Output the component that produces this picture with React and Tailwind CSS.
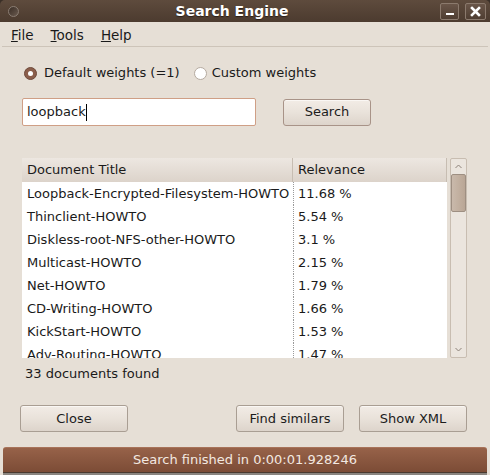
import React from "react";

const rows = [
  ["Loopback-Encrypted-Filesystem-HOWTO", "11.68 %"],
  ["Thinclient-HOWTO", "5.54 %"],
  ["Diskless-root-NFS-other-HOWTO", "3.1 %"],
  ["Multicast-HOWTO", "2.15 %"],
  ["Net-HOWTO", "1.79 %"],
  ["CD-Writing-HOWTO", "1.66 %"],
  ["KickStart-HOWTO", "1.53 %"],
  ["Adv-Routing-HOWTO", "1.47 %"],
];

function Btn({ children, className = "" }) {
  return (
    <div
      className={
        "h-[27px] flex items-center justify-center rounded-[3px] border border-[#a99e93] bg-gradient-to-b from-[#f2ece6] via-[#e9e2da] to-[#ddd4cb] text-[13px] text-[#1c1c1c] shadow-[inset_0_1px_0_#faf7f4] " +
        className
      }
    >
      {children}
    </div>
  );
}

export default function App() {
  return (
    <div className="w-[490px] h-[475px] bg-[#3a2f27] overflow-hidden font-['DejaVu_Sans',sans-serif] text-[13px] text-[#1a1a1a]">
      {/* title bar */}
      <div className="h-[22px] rounded-t-[5px] bg-gradient-to-b from-[#5e4b3d] to-[#4c3b2f] flex items-center relative">
        <div className="ml-[8px] w-[11px] h-[11px] rounded-full border border-[#8a7d73] bg-gradient-to-br from-[#3a2e26] to-[#6a5a4f]" />
        <div className="absolute left-0 right-0 top-0 h-[22px] pr-[26px] flex items-center justify-center text-[14px] font-bold text-white [text-shadow:0_1px_1px_#2a1f18]">
          Search Engine
        </div>
        <div className="ml-auto mr-[4px] flex gap-[6px]">
          <div className="w-[19px] h-[17px] rounded-[2px] border border-[#8b7a6d] bg-gradient-to-b from-[#6a5649] to-[#4f3e32] flex items-end justify-center pb-[4px]">
            <div className="w-[8px] h-[2px] bg-white" />
          </div>
          <div className="w-[21px] h-[17px] rounded-[2px] border border-[#8b7a6d] bg-gradient-to-b from-[#6a5649] to-[#4f3e32] flex items-center justify-center">
            <svg width="11" height="11" viewBox="0 0 11 11">
              <path d="M2 2 L9 9 M9 2 L2 9" stroke="white" strokeWidth="2.6" strokeLinecap="square" />
            </svg>
          </div>
        </div>
      </div>

      {/* window body */}
      <div className="h-[453px] bg-[#e6dfd6] flex flex-col">
        {/* menu */}
        <div className="h-[25px] pt-[2px] flex items-center border-b border-[#cdc4b9] mx-[2px] text-[13.5px]">
          <span className="ml-[9px]"><span className="underline">F</span>ile</span>
          <span className="ml-[17px]"><span className="underline">T</span>ools</span>
          <span className="ml-[17px]"><span className="underline">H</span>elp</span>
        </div>

        {/* radios */}
        <div className="mt-[16px] h-[20px] flex items-center">
          <div className="ml-[24px] w-[13px] h-[13px] rounded-full bg-[#8b5e4b] border border-[#6f4a3b] flex items-center justify-center">
            <div className="w-[5px] h-[5px] rounded-full bg-white" />
          </div>
          <span className="ml-[7px]">Default weights (=1)</span>
          <div className="ml-[14px] w-[13px] h-[13px] rounded-full bg-white border border-[#b5aaa0]" />
          <span className="ml-[5px]">Custom weights</span>
        </div>

        {/* input row */}
        <div className="mt-[15px] flex items-center">
          <div className="ml-[22px] w-[234px] h-[28px] bg-white border border-[#cf9f86] rounded-[2px] flex items-center pl-[4px]">
            <span>loopback</span>
            <span className="w-px h-[17px] bg-black" />
          </div>
          <Btn className="ml-[27px] w-[88px] from-[#efe2da] via-[#e6d3c8] to-[#dcc7bb] border-[#a89388]">Search</Btn>
        </div>

        {/* tree */}
        <div className="mt-[32px] ml-[22px] flex">
          <div className="w-[425px] h-[200px] flex flex-col overflow-hidden">
            <div className="h-[24px] flex items-center bg-gradient-to-b from-[#ede7e1] to-[#dcd3ca] shrink-0">
              <div className="w-[271px] h-full flex items-center pl-[5px] border-r border-[#c7bdb2]">Document Title</div>
              <div className="flex-1 h-full flex items-center pl-[5px] border-r border-[#c7bdb2]">Relevance</div>
            </div>
            <div className="flex-1 bg-white overflow-hidden">
              {rows.map(([t, r]) => (
                <div key={t} className="h-[23px] flex items-center">
                  <div className="w-[271px] pl-[5px] whitespace-nowrap overflow-hidden">{t}</div>
                  <div className="h-full pl-[4px] flex items-center border-l border-dotted border-[#9a9a9a]">{r}</div>
                </div>
              ))}
            </div>
          </div>
          {/* scrollbar */}
          <div className="ml-[3px] w-[17px] h-[200px] rounded-[2px] border border-[#c8bdb1] bg-[#ebe5de] flex flex-col items-center">
            <div className="h-[15px] flex items-center justify-center">
              <svg width="7" height="5" viewBox="0 0 7 5"><path d="M0.5 4 L3.5 1 L6.5 4" stroke="#8c8178" fill="none" strokeWidth="1" /></svg>
            </div>
            <div className="w-[15px] h-[38px] rounded-[2px] border border-[#9e8f82] bg-gradient-to-r from-[#c9b9ab] via-[#c2b0a0] to-[#b9a696]" />
            <div className="flex-1" />
            <div className="h-[16px] flex items-center justify-center">
              <svg width="7" height="5" viewBox="0 0 7 5"><path d="M0.5 1 L3.5 4 L6.5 1" stroke="#8c8178" fill="none" strokeWidth="1" /></svg>
            </div>
          </div>
        </div>

        <div className="mt-[7px] ml-[25px] h-[18px] flex items-center">33 documents found</div>

        {/* buttons */}
        <div className="mt-[22px] flex">
          <Btn className="ml-[20px] w-[108px]">Close</Btn>
          <Btn className="ml-[108px] w-[108px]">Find similars</Btn>
          <Btn className="ml-[15px] w-[108px]">Show XML</Btn>
        </div>

        {/* status */}
        <div className="mt-[15px] mx-[3px] h-[25px] rounded-t-[3px] bg-gradient-to-b from-[#976249] to-[#7c4c36] flex items-center justify-center text-[#f3e9e1] border-t border-[#a8735a]">
          Search finished in 0:00:01.928246
        </div>
        <div className="flex-1 mx-[3px] border-t border-[#4a3a30] bg-[#8a8580]" />
      </div>
    </div>
  );
}
